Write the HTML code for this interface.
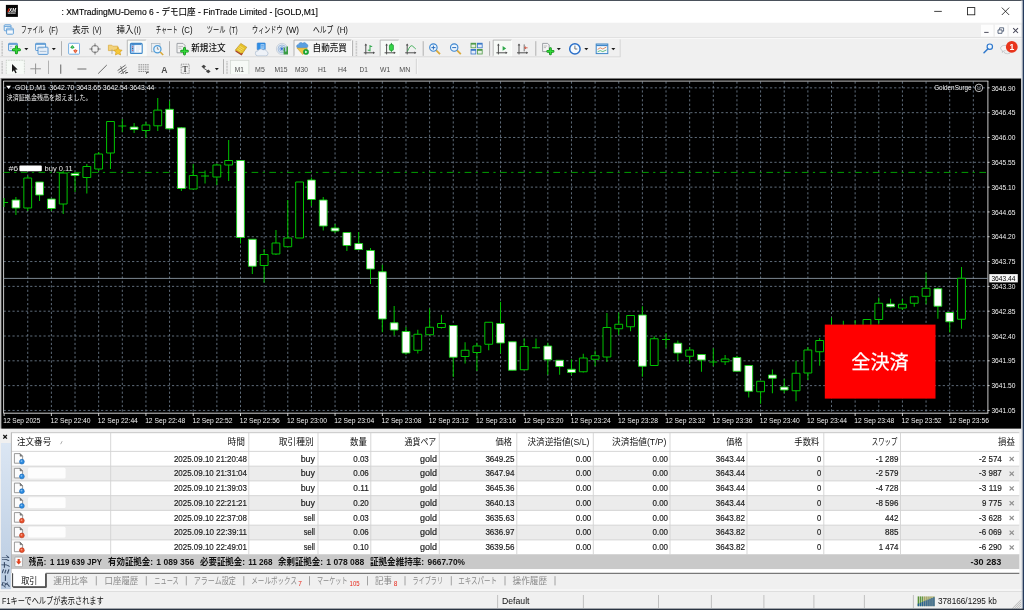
<!DOCTYPE html>
<html lang="ja"><head><meta charset="utf-8"><title>XMTradingMU-Demo 6 - デモ口座 - [GOLD,M1]</title>
<style>
html,body{margin:0;padding:0;background:#f0f0f0;}
body{width:1024px;height:610px;position:relative;overflow:hidden;font-family:'Liberation Sans','Noto Sans CJK JP',sans-serif;}
svg{position:absolute;left:0;display:block;overflow:hidden;will-change:transform}
svg text{font-family:'Liberation Sans','Noto Sans CJK JP',sans-serif;white-space:pre}
#frame{position:absolute;left:0;top:0;width:1024px;height:610px;pointer-events:none}
</style></head><body>
<svg id="top" width="1024" height="78" viewBox="0 0 1024 78" style="top:0">
<rect x="0" y="0" width="1024" height="78" fill="#f0f0f0"/>
<rect x="0" y="0" width="1024" height="22.7" fill="#fff"/>
<rect x="5.9" y="4.9" width="12" height="12" fill="#050505"/>
<path d="M7.3 11.9l1-3.4h1.5l-1 3.4z" fill="#c8200c"/>
<text x="9.1" y="11.5" font-size="4.8" fill="#fff" font-weight="bold" textLength="7" lengthAdjust="spacingAndGlyphs" font-style="italic">XM</text>
<rect x="7.6" y="12.2" width="8.2" height="1.3" fill="#9a9a9a" opacity="0.85"/>
<text x="7.7" y="13.5" font-size="1.6" fill="#ddd" font-weight="bold" textLength="8" lengthAdjust="spacingAndGlyphs">TRADING</text>
<text x="61.4" y="14.8" font-size="9.0" fill="#000" textLength="256.6" lengthAdjust="spacingAndGlyphs" stroke="#000" stroke-width="0.12">: XMTradingMU-Demo 6 - デモ口座 - FinTrade Limited - [GOLD,M1]</text>
<path d="M934.2 11.4h7.6" stroke="#111" stroke-width="0.8" fill="none"/>
<rect x="967.6" y="7.6" width="7.2" height="7.2" stroke="#111" stroke-width="0.8" fill="none"/>
<path d="M1001.8 7.6l7.4 7.4M1009.2 7.6l-7.4 7.4" stroke="#111" stroke-width="0.8" fill="none"/>
<rect x="0" y="37.3" width="1024" height="0.8" fill="#dadada"/><rect x="0" y="38.1" width="1024" height="0.7" fill="#fcfcfc"/>
<rect x="4.2" y="24.8" width="6.8" height="6" rx="0.8" fill="#eaf3fb" stroke="#5b9bd5" stroke-width="0.9"/><rect x="6.6" y="28.2" width="6.8" height="6" rx="0.8" fill="#f4f9fd" stroke="#5b9bd5" stroke-width="0.9"/><path d="M4.4 26.4h6.4M6.8 29.8h6.4" stroke="#5b9bd5" stroke-width="0.9"/>
<text x="20.9" y="33.3" font-size="8.9" fill="#0a0a0a" textLength="23.1" lengthAdjust="spacingAndGlyphs">ファイル</text>
<text x="48.9" y="33.3" font-size="8.9" fill="#0a0a0a" textLength="9.1" lengthAdjust="spacingAndGlyphs">(F)</text>
<text x="72.2" y="33.3" font-size="8.9" fill="#0a0a0a" textLength="17" lengthAdjust="spacingAndGlyphs">表示</text>
<text x="92.4" y="33.3" font-size="8.9" fill="#0a0a0a" textLength="9.1" lengthAdjust="spacingAndGlyphs">(V)</text>
<text x="116.6" y="33.3" font-size="8.9" fill="#0a0a0a" textLength="16.9" lengthAdjust="spacingAndGlyphs">挿入</text>
<text x="134.1" y="33.3" font-size="8.9" fill="#0a0a0a" textLength="7" lengthAdjust="spacingAndGlyphs">(I)</text>
<text x="155.7" y="33.3" font-size="8.9" fill="#0a0a0a" textLength="22.2" lengthAdjust="spacingAndGlyphs">チャート</text>
<text x="181.7" y="33.3" font-size="8.9" fill="#0a0a0a" textLength="10.8" lengthAdjust="spacingAndGlyphs">(C)</text>
<text x="206.7" y="33.3" font-size="8.9" fill="#0a0a0a" textLength="18.8" lengthAdjust="spacingAndGlyphs">ツール</text>
<text x="229.3" y="33.3" font-size="8.9" fill="#0a0a0a" textLength="8.3" lengthAdjust="spacingAndGlyphs">(T)</text>
<text x="252.1" y="33.3" font-size="8.9" fill="#0a0a0a" textLength="30.4" lengthAdjust="spacingAndGlyphs">ウィンドウ</text>
<text x="286" y="33.3" font-size="8.9" fill="#0a0a0a" textLength="13" lengthAdjust="spacingAndGlyphs">(W)</text>
<text x="313" y="33.3" font-size="8.9" fill="#0a0a0a" textLength="20.3" lengthAdjust="spacingAndGlyphs">ヘルプ</text>
<text x="337.1" y="33.3" font-size="8.9" fill="#0a0a0a" textLength="10.8" lengthAdjust="spacingAndGlyphs">(H)</text>
<rect x="981" y="24.8" width="12.3" height="11.7" fill="#fdfdfd"/>
<rect x="995" y="24.8" width="12.3" height="11.7" fill="#fdfdfd"/>
<rect x="1008.9" y="24.8" width="12.3" height="11.7" fill="#fdfdfd"/>
<path d="M984.2 32.4h4.4" stroke="#445" stroke-width="0.95"/>
<path d="M998 29.9h4v3.4h-4zM999.6 29.7v-1.9h4v3.4h-1.4" stroke="#3a4a66" stroke-width="0.8" fill="none"/>
<path d="M1013.2 28.2l4.8 4.8M1018 28.2l-4.8 4.8" stroke="#445" stroke-width="1.05"/>
<rect x="0" y="57.3" width="620" height="0.9" fill="#fafafa"/>
<rect x="1.4" y="41.4" width="1.6" height="0.8" fill="#b8b8b8"/><rect x="1.4" y="42.9" width="1.6" height="0.8" fill="#b8b8b8"/><rect x="1.4" y="44.4" width="1.6" height="0.8" fill="#b8b8b8"/><rect x="1.4" y="45.9" width="1.6" height="0.8" fill="#b8b8b8"/><rect x="1.4" y="47.4" width="1.6" height="0.8" fill="#b8b8b8"/><rect x="1.4" y="48.9" width="1.6" height="0.8" fill="#b8b8b8"/><rect x="1.4" y="50.4" width="1.6" height="0.8" fill="#b8b8b8"/><rect x="1.4" y="51.9" width="1.6" height="0.8" fill="#b8b8b8"/><rect x="1.4" y="53.4" width="1.6" height="0.8" fill="#b8b8b8"/><rect x="1.4" y="54.9" width="1.6" height="0.8" fill="#b8b8b8"/>
<rect x="8.6" y="43.3" width="8.8" height="7.4" rx="0.7" fill="#eef5fc" stroke="#4a8fd0" stroke-width="0.9"/><path d="M8.8 44.2h8.4" stroke="#3d86c8" stroke-width="1"/><path d="M10 46.4h2.4M10 48.2h1.6" stroke="#7d9fc0" stroke-width="0.6"/>
<path d="M16.4 46.70v6.0M13.40 49.7h6.0" stroke="#0b8a12" stroke-width="3.0" stroke-linecap="round"/><path d="M16.4 46.70v6.00M13.40 49.7h6.00" stroke="#34d63a" stroke-width="1.70" stroke-linecap="round"/>
<path d="M24.3 48.1h4l-2 2.1z" fill="#1a1a1a"/>
<rect x="35.6" y="43.3" width="10" height="7.2" rx="0.7" fill="#eef5fc" stroke="#4a8fd0" stroke-width="0.9"/><path d="M35.8 44.2h9.6" stroke="#3d86c8" stroke-width="1"/><rect x="38" y="47.2" width="10" height="7.2" rx="0.7" fill="#e6eff9" stroke="#4a8fd0" stroke-width="0.9"/><path d="M37.2 47.9h6.4" stroke="#7d9fc0" stroke-width="0.6"/><path d="M39.6 51.4h6.8" stroke="#7d9fc0" stroke-width="0.6"/>
<path d="M51.8 48.1h4l-2 2.1z" fill="#1a1a1a"/>
<path d="M61.5 41.2V55.8" stroke="#a9a9a9" stroke-width="0.9"/>
<rect x="68.6" y="43.3" width="10.9" height="10.9" rx="0.8" fill="#fdfeff" stroke="#6aa8e0" stroke-width="0.9"/><path d="M70.2 47.6l2.2-2.6 2.2 2.6-2.2 1.4z" fill="#27a844"/><path d="M72.4 46v3" stroke="#8fe0a0" stroke-width="0.5"/><path d="M73.2 50.6l2.2-1.4 2.2 1.4-2.2 2.8z" fill="#e2572c"/><path d="M75.4 50v2.6" stroke="#f6b09a" stroke-width="0.5"/>
<circle cx="95" cy="49" r="3.6" fill="none" stroke="#707070" stroke-width="0.9"/><path d="M95 43.4v3.4M95 51.2v3.4M89.4 49h3.4M97.2 49h3.4" stroke="#707070" stroke-width="0.9"/>
<path d="M108.4 45.2h3.4l1 1h5v4.4h-9.4z" fill="#f3d27a" stroke="#d9a93a" stroke-width="0.7"/><path d="M112 49.4v4.6" stroke="#999" stroke-width="0.7"/><path d="M118 47.2l1.3 2.6 2.8.4-2 2 .5 2.8-2.6-1.3-2.6 1.3.5-2.8-2-2 2.8-.4z" fill="#f6c83a" stroke="#d19a1a" stroke-width="0.6"/>
<rect x="127.3" y="40.1" width="18.9" height="16.1" fill="#f7faf7"/><path d="M127.3 56.2V40.1H146.2" stroke="#ababab" stroke-width="0.8" fill="none"/><path d="M127.3 56.2H146.2V40.1" stroke="#fdfdfd" stroke-width="0.8" fill="none"/>
<rect x="130.4" y="43.4" width="11.8" height="10" rx="1" fill="#fbfdff" stroke="#3d86c8" stroke-width="1.1"/><rect x="131" y="44" width="3.4" height="8.8" fill="#8fbdec"/><path d="M131.4 44.6h10" stroke="#3d86c8" stroke-width="1"/><path d="M132 46.8h1.2M132 50.4h1.2" stroke="#d44" stroke-width="0.8"/><path d="M132 48.6h1.2" stroke="#246" stroke-width="0.8"/><path d="M136 47h4.4M136 49h4.4M136 51h3" stroke="#c4d4e4" stroke-width="0.6"/>
<rect x="151.4" y="43.4" width="8.6" height="8.4" fill="#e9eef2" stroke="#a9b4bd" stroke-width="0.7"/><circle cx="157.4" cy="49.2" r="3.6" fill="#eaf4fc" stroke="#4a9ad8" stroke-width="1.2"/><path d="M157.4 47v2.2h1.6" stroke="#555" stroke-width="0.6" fill="none"/><path d="M160.2 52l3 3" stroke="#d9a93a" stroke-width="1.6"/>
<path d="M169.5 41.2V55.8" stroke="#a9a9a9" stroke-width="0.9"/>
<path d="M177 43.4h6l2 2v7.4h-8z" fill="#f4f4f4" stroke="#8a8f96" stroke-width="0.8"/><path d="M178.4 46.4h4.6M178.4 48.2h3" stroke="#999" stroke-width="0.6"/><path d="M184.5 48.30v5.8M181.60 51.2h5.8" stroke="#0b8a12" stroke-width="2.8" stroke-linecap="round"/><path d="M184.5 48.30v5.80M181.60 51.2h5.80" stroke="#34d63a" stroke-width="1.50" stroke-linecap="round"/>
<text x="191.2" y="51.1" font-size="8.8" fill="#111" font-weight="500" textLength="34.4" lengthAdjust="spacingAndGlyphs">新規注文</text>
<path d="M235.2 50.2l5.6-6.8 6 3.8-5 7.2z" fill="#e6c22a" stroke="#b98a1a" stroke-width="0.6"/><path d="M235.6 51l5.8 3.6 1-1.4" stroke="#a8452a" stroke-width="1.2" fill="none"/><path d="M238.4 47.6l4.2 2.6M239.6 46.2l4.2 2.6M237.4 49.2l4 2.4" stroke="#f6e48a" stroke-width="0.7"/>
<rect x="257.2" y="43" width="8" height="6.8" rx="0.6" fill="#2f8fe6" stroke="#2a78cc" stroke-width="0.6"/><rect x="260.6" y="44.2" width="3.8" height="4.6" fill="#a8d4fa"/><path d="M261.2 45.6h2.6M261.2 47h2.6" stroke="#2a78cc" stroke-width="0.5"/><path transform="translate(0,1.1)" d="M255.4 52.2a2.4 2.2 0 0 1 2.6-2.4a3 3 0 0 1 5-1a2.6 2.6 0 0 1 3.6 1.4a2.2 2.2 0 0 1 1.4 2.4a2.4 2.4 0 0 1-2.4 2.2h-7.8a2.4 2.4 0 0 1-2.4-2.4z" fill="#eef2f8" stroke="#9fb2c8" stroke-width="0.6"/>
<circle cx="282" cy="48.9" r="5.6" fill="#e6ebf1" stroke="#b4c0cc" stroke-width="0.6"/><circle cx="282" cy="48.9" r="3.9" fill="none" stroke="#8fb0d8" stroke-width="0.8"/><circle cx="282" cy="48.9" r="2.2" fill="none" stroke="#6a9ad6" stroke-width="0.8"/><circle cx="281.8" cy="48.8" r="1.2" fill="#2f6fd0"/><path d="M283.6 47.4h1.4v4h1.4v-5h1.6v8h-4.4z" fill="#3a9c44"/>
<rect x="294" y="40.1" width="57.4" height="16.1" fill="#f6f6f6"/><path d="M294 56.2V40.1H351.4" stroke="#a4a4a4" stroke-width="0.8" fill="none"/><path d="M294 56.2H351.4V40.1" stroke="#fcfcfc" stroke-width="0.8" fill="none"/>
<path d="M296.8 47.8l10.6 0-4.6 6.8z" fill="#f0c748" stroke="#c99a2a" stroke-width="0.6"/><path d="M296.6 46.6a2 2 0 0 1 1.8-2.2a2.6 2.6 0 0 1 4.2-1.2a2.8 2.8 0 0 1 4 .8a1.9 1.9 0 0 1 1.2 2.4a1.6 1.6 0 0 1-1.4 1.2h-8.4a1.6 1.6 0 0 1-1.4-1z" fill="#5a9fe0" stroke="#3d7fc4" stroke-width="0.5"/><circle cx="306" cy="51.9" r="2.7" fill="#18a834" stroke="#0d8a24" stroke-width="0.4"/><path d="M305.2 50.5l2.3 1.4-2.3 1.4z" fill="#fff"/>
<text x="312.6" y="51.2" font-size="8.8" fill="#111" font-weight="500" textLength="34.2" lengthAdjust="spacingAndGlyphs">自動売買</text>
<path d="M352.6 40.4V56" stroke="#a9a9a9" stroke-width="0.9"/>
<rect x="355.6" y="41.4" width="1.6" height="0.8" fill="#b8b8b8"/><rect x="355.6" y="42.9" width="1.6" height="0.8" fill="#b8b8b8"/><rect x="355.6" y="44.4" width="1.6" height="0.8" fill="#b8b8b8"/><rect x="355.6" y="45.9" width="1.6" height="0.8" fill="#b8b8b8"/><rect x="355.6" y="47.4" width="1.6" height="0.8" fill="#b8b8b8"/><rect x="355.6" y="48.9" width="1.6" height="0.8" fill="#b8b8b8"/><rect x="355.6" y="50.4" width="1.6" height="0.8" fill="#b8b8b8"/><rect x="355.6" y="51.9" width="1.6" height="0.8" fill="#b8b8b8"/><rect x="355.6" y="53.4" width="1.6" height="0.8" fill="#b8b8b8"/><rect x="355.6" y="54.9" width="1.6" height="0.8" fill="#b8b8b8"/>
<path d="M365.8 44.4V54.4M363.8 52.8H374.2" stroke="#505050" stroke-width="1" fill="none"/><path d="M365.8 43.4l1.3 2h-2.6zM375.0 52.8l-2 1.3v-2.6z" fill="#505050"/><path d="M370 45v6.4M370 46.4h2.2M367.8 50.2h2.2" stroke="#2fa84a" stroke-width="1"/>
<rect x="380.2" y="40.1" width="18.7" height="16.1" fill="#f7faf7"/><path d="M380.2 56.2V40.1H398.9" stroke="#ababab" stroke-width="0.8" fill="none"/><path d="M380.2 56.2H398.9V40.1" stroke="#fdfdfd" stroke-width="0.8" fill="none"/>
<path d="M386.6 44.4V54.4M384.6 52.8H395.0" stroke="#505050" stroke-width="1" fill="none"/><path d="M386.6 43.4l1.3 2h-2.6zM395.8 52.8l-2 1.3v-2.6z" fill="#505050"/><path d="M391.4 42.9v9" stroke="#17902c" stroke-width="0.9"/><rect x="389.4" y="44.6" width="4" height="5.8" rx="1" fill="#35d648" stroke="#17902c" stroke-width="0.7"/>
<path d="M407.2 44.4V54.4M405.2 52.8H415.59999999999997" stroke="#505050" stroke-width="1" fill="none"/><path d="M407.2 43.4l1.3 2h-2.6zM416.4 52.8l-2 1.3v-2.6z" fill="#505050"/><path d="M407.4 51.4q3-7 5-5.4t3.4 3" stroke="#2fa84a" stroke-width="0.9" fill="none"/>
<path d="M423.2 41.2V55.8" stroke="#a9a9a9" stroke-width="0.9"/>
<path d="M436.0 50.2l4 4" stroke="#d9a93a" stroke-width="1.8"/><circle cx="433.4" cy="47.6" r="3.7" fill="#eaf4fc" stroke="#3d86d0" stroke-width="1.1"/><path d="M431.4 47.6h4M433.4 45.6v4" stroke="#2a6fc0" stroke-width="1"/>
<path d="M456.8 50.2l4 4" stroke="#d9a93a" stroke-width="1.8"/><circle cx="454.2" cy="47.6" r="3.7" fill="#eaf4fc" stroke="#3d86d0" stroke-width="1.1"/><path d="M452.2 47.6h4" stroke="#2a6fc0" stroke-width="1"/>
<rect x="470.6" y="42.8" width="5.6" height="5.4" fill="#4f9a4a"/><rect x="477" y="42.8" width="5.6" height="5.4" fill="#3a78c8"/><rect x="470.6" y="49" width="5.6" height="5.4" fill="#3a78c8"/><rect x="477" y="49" width="5.6" height="5.4" fill="#4f9a4a"/><rect x="471.4" y="44.6" width="4" height="2.8" fill="#e8f0e4"/><rect x="477.8" y="44.6" width="4" height="2.8" fill="#e4ecf8"/><rect x="471.4" y="50.8" width="4" height="2.8" fill="#e4ecf8"/><rect x="477.8" y="50.8" width="4" height="2.8" fill="#e8f0e4"/>
<path d="M489.6 41.2V55.8" stroke="#a9a9a9" stroke-width="0.9"/>
<rect x="493.2" y="40.1" width="18.4" height="16.1" fill="#f7faf7"/><path d="M493.2 56.2V40.1H511.59999999999997" stroke="#ababab" stroke-width="0.8" fill="none"/><path d="M493.2 56.2H511.59999999999997V40.1" stroke="#fdfdfd" stroke-width="0.8" fill="none"/>
<path d="M498.4 44.4V54.4M496.4 52.8H506.79999999999995" stroke="#505050" stroke-width="1" fill="none"/><path d="M498.4 43.4l1.3 2h-2.6zM507.59999999999997 52.8l-2 1.3v-2.6z" fill="#505050"/><path d="M502.6 46l3.6 2.4-3.6 2.4z" fill="#2fa84a"/>
<path d="M519 44.4V54.4M517 52.8H527.4" stroke="#505050" stroke-width="1" fill="none"/><path d="M519 43.4l1.3 2h-2.6zM528.2 52.8l-2 1.3v-2.6z" fill="#505050"/><path d="M524.2 44.4v7" stroke="#555" stroke-width="0.8"/><path d="M527.6 47.8h-2.8m1.2-1.2l-1.4 1.2 1.4 1.2" stroke="#d0402a" stroke-width="0.8" fill="none"/>
<path d="M535.8 41.2V55.8" stroke="#a9a9a9" stroke-width="0.9"/>
<path d="M542.6 43.4h5l1.6 1.6v6.6h-6.6z" fill="#f4f4f4" stroke="#8a8f96" stroke-width="0.8"/><path d="M543.8 46h3.4M543.8 47.6h2.2" stroke="#999" stroke-width="0.6"/><path d="M550.4 48.60v5.4M547.70 51.3h5.4" stroke="#0b8a12" stroke-width="2.7" stroke-linecap="round"/><path d="M550.4 48.60v5.40M547.70 51.3h5.40" stroke="#34d63a" stroke-width="1.40" stroke-linecap="round"/>
<path d="M556.8 48.1h4l-2 2.1z" fill="#1a1a1a"/>
<circle cx="574.9" cy="48.9" r="5.2" fill="#f6fbff" stroke="#2a6fc8" stroke-width="1.5"/><path d="M574.9 45.6v3.4h2.4" stroke="#444" stroke-width="0.7" fill="none"/>
<path d="M584.3 48.1h4l-2 2.1z" fill="#1a1a1a"/>
<rect x="596.2" y="44" width="11.6" height="9.6" fill="#f2f7fc" stroke="#3d86c8" stroke-width="1"/><path d="M596.2 45.4h11.6" stroke="#3d86c8" stroke-width="1.4"/><path d="M597.6 49.4l2.6-1.6 2.6 1.2 3.6-2" stroke="#d9652a" stroke-width="0.7" fill="none"/><path d="M597.6 51.8l2.6-1.2 2.6 1 3.6-1.6" stroke="#2fa84a" stroke-width="0.7" fill="none"/>
<path d="M611.3 48.1h4l-2 2.1z" fill="#1a1a1a"/>
<path d="M620.2 39.4V56.9H0" stroke="#d0d0d0" stroke-width="0.8" fill="none"/>
<circle cx="989.8" cy="46.7" r="2.7" fill="#eef6fd" stroke="#2f78cc" stroke-width="1.2"/><path d="M987.8 48.9l-3.8 3.9" stroke="#2f78cc" stroke-width="1.5" stroke-linecap="round"/>
<path d="M1000.6 48.2a4 2.8 0 1 1 3 2.7l-1.2 1.6 0-1.9a4 2.8 0 0 1-1.8-2.4z" fill="#f4f4f4" stroke="#b4b8bc" stroke-width="0.7"/><path d="M1004 51.6a3.4 2.2 0 1 0 3.4-2.2" fill="#ededed" stroke="#b4b8bc" stroke-width="0.6"/>
<circle cx="1011.8" cy="46.9" r="5.9" fill="#e8341c"/>
<text x="1011.8" y="49.9" font-size="8.6" fill="#fff" text-anchor="middle" font-weight="bold">1</text>
<rect x="1.4" y="61.4" width="1.6" height="0.8" fill="#b8b8b8"/><rect x="1.4" y="62.9" width="1.6" height="0.8" fill="#b8b8b8"/><rect x="1.4" y="64.4" width="1.6" height="0.8" fill="#b8b8b8"/><rect x="1.4" y="65.9" width="1.6" height="0.8" fill="#b8b8b8"/><rect x="1.4" y="67.4" width="1.6" height="0.8" fill="#b8b8b8"/><rect x="1.4" y="68.9" width="1.6" height="0.8" fill="#b8b8b8"/><rect x="1.4" y="70.4" width="1.6" height="0.8" fill="#b8b8b8"/><rect x="1.4" y="71.9" width="1.6" height="0.8" fill="#b8b8b8"/><rect x="1.4" y="73.4" width="1.6" height="0.8" fill="#b8b8b8"/><rect x="1.4" y="74.9" width="1.6" height="0.8" fill="#b8b8b8"/>
<rect x="6.3" y="60.3" width="18.1" height="16" fill="#f6faf6" stroke="#aab4aa" stroke-width="0.6" stroke-dasharray="0.8 0.8"/>
<path d="M12 63.9v8l1.9-1.7 1.5 3.1 1.3-.6-1.5-3 2.5-.1z" fill="#1a1a1a"/>
<path d="M35.6 63.5v10.5M30.3 68.8h10.6" stroke="#8a8a8a" stroke-width="0.9"/>
<path d="M48.5 60.6V76.2" stroke="#a9a9a9" stroke-width="0.9"/>
<path d="M60.7 64.4v9.4" stroke="#7a7a7a" stroke-width="1.2"/>
<path d="M77.4 69h9" stroke="#7a7a7a" stroke-width="1.1"/>
<path d="M98.2 73.6l8.6-8.6" stroke="#6a6a6a" stroke-width="1"/>
<path d="M117.6 70.6l8-5.6M118.6 72.8l8-5.6M119.8 74.8l6.6-4.6" stroke="#5a5a5a" stroke-width="0.9" fill="none"/><path d="M120.6 66.2l3 7.6" stroke="#5a5a5a" stroke-width="0.7"/><text x="125.2" y="76" font-size="4.6" fill="#333" font-weight="bold">E</text>
<path d="M138.4 64.8h10.4M138.4 67h10.4M138.4 69.2h10.4M138.4 71.4h10.4" stroke="#6e6e6e" stroke-width="0.8" stroke-dasharray="1.5 0.7"/><text x="146" y="76.2" font-size="4.6" fill="#333" font-weight="bold">F</text>
<text x="164.4" y="72.7" font-size="8.6" fill="#4a4a4a" text-anchor="middle" font-weight="bold">A</text>
<rect x="181.2" y="64.2" width="8" height="9.2" fill="none" stroke="#6a6a6a" stroke-width="0.7" stroke-dasharray="1 0.7"/><text x="185.2" y="72.3" font-size="7.8" fill="#444" text-anchor="middle" font-weight="bold" style="font-family:'Liberation Serif',serif">T</text>
<path d="M201.4 66.6l2.3-1.9 2.3 1.9-2.3 1.9zM206 71.4l2.3-1.9 2.3 1.9-2.3 1.9z" fill="#444"/><path d="M203.6 68.2l4.6 3" stroke="#444" stroke-width="0.9"/>
<path d="M214.8 68.10000000000001h4l-2 2.1z" fill="#1a1a1a"/>
<path d="M223.5 59.2V77" stroke="#a9a9a9" stroke-width="0.9"/>
<rect x="226.2" y="61.4" width="1.6" height="0.8" fill="#b8b8b8"/><rect x="226.2" y="62.9" width="1.6" height="0.8" fill="#b8b8b8"/><rect x="226.2" y="64.4" width="1.6" height="0.8" fill="#b8b8b8"/><rect x="226.2" y="65.9" width="1.6" height="0.8" fill="#b8b8b8"/><rect x="226.2" y="67.4" width="1.6" height="0.8" fill="#b8b8b8"/><rect x="226.2" y="68.9" width="1.6" height="0.8" fill="#b8b8b8"/><rect x="226.2" y="70.4" width="1.6" height="0.8" fill="#b8b8b8"/><rect x="226.2" y="71.9" width="1.6" height="0.8" fill="#b8b8b8"/><rect x="226.2" y="73.4" width="1.6" height="0.8" fill="#b8b8b8"/><rect x="226.2" y="74.9" width="1.6" height="0.8" fill="#b8b8b8"/>
<rect x="230.6" y="60.3" width="18.3" height="16" fill="#f6faf6" stroke="#cfd6cf" stroke-width="0.7"/>
<text x="234.8" y="71.9" font-size="7.6" fill="#4c4c4c" textLength="9.1" lengthAdjust="spacingAndGlyphs">M1</text>
<text x="255.1" y="71.9" font-size="7.6" fill="#4c4c4c" textLength="9.7" lengthAdjust="spacingAndGlyphs">M5</text>
<text x="274.5" y="71.9" font-size="7.6" fill="#4c4c4c" textLength="13.1" lengthAdjust="spacingAndGlyphs">M15</text>
<text x="294.9" y="71.9" font-size="7.6" fill="#4c4c4c" textLength="13" lengthAdjust="spacingAndGlyphs">M30</text>
<text x="318" y="71.9" font-size="7.6" fill="#4c4c4c" textLength="8.6" lengthAdjust="spacingAndGlyphs">H1</text>
<text x="338" y="71.9" font-size="7.6" fill="#4c4c4c" textLength="8.8" lengthAdjust="spacingAndGlyphs">H4</text>
<text x="359.6" y="71.9" font-size="7.6" fill="#4c4c4c" textLength="8.3" lengthAdjust="spacingAndGlyphs">D1</text>
<text x="380" y="71.9" font-size="7.6" fill="#4c4c4c" textLength="10.2" lengthAdjust="spacingAndGlyphs">W1</text>
<text x="399.3" y="71.9" font-size="7.6" fill="#4c4c4c" textLength="11" lengthAdjust="spacingAndGlyphs">MN</text>
<path d="M416.4 58.8V77.4" stroke="#c6c6c6" stroke-width="0.9" fill="none"/><path d="M417.2 58.8V77.4" stroke="#fcfcfc" stroke-width="0.8" fill="none"/>
<rect x="0" y="76.6" width="1024" height="1.4" fill="#fbfbfb"/>
</svg>
<svg id="chart" width="1024" height="360" viewBox="0 74 1024 360" style="position:absolute;left:0;top:74px">
<rect x="0" y="74" width="1024" height="360" fill="#f0f0f0"/>
<rect x="0" y="76.6" width="1022" height="1.4" fill="#fbfbfb"/>
<rect x="0.5" y="77.9" width="1020.7" height="350.7" fill="#8c8c8c"/>
<rect x="1.5" y="78.9" width="1019.6" height="349.6" fill="#000"/>
<path d="M3.6 87.85H988M3.6 112.66H988M3.6 137.48H988M3.6 162.30H988M3.6 187.11H988M3.6 211.93H988M3.6 236.74H988M3.6 261.56H988M3.6 286.37H988M3.6 311.19H988M3.6 336.00H988M3.6 360.82H988M3.6 385.63H988M3.6 410.45H988M27.74 81.5V413M51.38 81.5V413M75.02 81.5V413M98.66 81.5V413M122.30 81.5V413M145.94 81.5V413M169.58 81.5V413M193.22 81.5V413M216.86 81.5V413M240.50 81.5V413M264.14 81.5V413M287.78 81.5V413M311.42 81.5V413M335.06 81.5V413M358.70 81.5V413M382.34 81.5V413M405.98 81.5V413M429.62 81.5V413M453.26 81.5V413M476.90 81.5V413M500.54 81.5V413M524.18 81.5V413M547.82 81.5V413M571.46 81.5V413M595.10 81.5V413M618.74 81.5V413M642.38 81.5V413M666.02 81.5V413M689.66 81.5V413M713.30 81.5V413M736.94 81.5V413M760.58 81.5V413M784.22 81.5V413M807.86 81.5V413M831.50 81.5V413M855.14 81.5V413M878.78 81.5V413M902.42 81.5V413M926.06 81.5V413M949.70 81.5V413M973.34 81.5V413" stroke="#708090" stroke-width="0.85" stroke-dasharray="2.2 2.23" fill="none"/>
<path d="M3.6 413.2V81M987.9 81V413.2" stroke="#e0e0e0" stroke-width="0.9" fill="none"/><path d="M3.2 81.1H988.3" stroke="#e0e0e0" stroke-width="0.85" fill="none"/>
<path d="M3.6 413.2H988.3" stroke="#e6e6e6" stroke-width="0.9" fill="none"/>
<path d="M3.6 172.4H988" stroke="#00b000" stroke-width="0.9" stroke-dasharray="6.65 4.4 2.25 4.45" stroke-dashoffset="0.5" fill="none"/>
<path d="M3.6 278.4H988" stroke="#8a96a2" stroke-width="0.9" fill="none"/>
<path d="M4.10 198V207M4.00 202.5H8.10M15.92 197V215M27.74 176V211M39.56 182V201M51.38 199V211M63.20 171V214M75.02 173.5V192M86.84 164V193.5M98.66 152V171M110.48 121.5V169M122.30 119V132M118.30 126H126.30M134.12 123V133M145.94 122V138M157.76 98V131M169.58 100.9V130M181.40 127V191M193.22 164V189M205.04 170.5V183.5M201.04 176H209.04M216.86 163.5V185M228.68 140V181M240.50 160.5V243.5M252.32 239.25V274M264.14 249V282.5M275.96 230V255M287.78 200V246.75M299.60 182V238M311.42 177.5V206M323.24 197V230.5M335.06 224V233M346.88 232.5V251M358.70 232V249.5M370.52 248V284M382.34 264.75V332.25M394.16 306V335.5M405.98 327V354.75M417.80 329.75V353.5M429.62 308.5V334.75M441.44 314.75V328.5M453.26 325.5V377M465.08 342.25V363.5M476.90 342.75V371M488.72 322.25V350.25M500.54 301.75V353.5M512.36 341.75V370.25M524.18 338.5V369.75M536.00 338.5V348.5M532.00 347.75H540.00M547.82 342.75V374.75M559.64 360.25V374.75M571.46 359.25V375M583.28 353.75V372.5M595.10 350.5V366.25M606.92 313V362M618.74 312.5V335M630.56 315.5V331.25M642.38 306.25V376.75M654.20 336.25V365.5M666.02 333.25V348.25M662.02 339.5H670.02M677.84 340.5V361.25M689.66 347V363.75M701.48 354.5V371.75M713.30 348.25V366.25M709.30 362H717.30M725.12 355V365M736.94 355.75V371.25M748.76 365.5V397.5M760.58 381.25V403.75M772.40 369.5V393.25M784.22 378.75V393M796.04 360.75V401.25M807.86 347V380M819.68 338V365.75M831.50 317.5V345M843.32 320.75V340M855.14 320V338M866.96 319.5V336M878.78 297.5V324.5M890.60 298.75V307.5M902.42 298.75V310M914.24 295.75V306.75M926.06 272.5V304.25M937.88 287.5V318.75M949.70 312.5V332.5M961.52 267V328.75" stroke="#00c400" stroke-width="1" fill="none"/>
<path d="M23.84 178H31.64V208H23.84ZM59.30 173H67.10V204H59.30ZM82.94 166.5H90.74V177.5H82.94ZM94.76 154H102.56V169H94.76ZM106.58 121.5H114.38V153H106.58ZM142.04 125H149.84V130.5H142.04ZM153.86 110.1H161.66V125.8H153.86ZM189.32 175.5H197.12V189H189.32ZM212.96 165H220.76V177H212.96ZM224.78 160.5H232.58V165H224.78ZM260.24 254.5H268.04V265.5H260.24ZM272.06 243H279.86V254H272.06ZM283.88 238H291.68V246.75H283.88ZM295.70 182H303.50V238H295.70ZM413.90 334.25H421.70V350.25H413.90ZM425.72 327.25H433.52V334.75H425.72ZM437.54 323.5H445.34V327.5H437.54ZM461.18 350.25H468.98V356.5H461.18ZM473.00 346H480.80V352.5H473.00ZM484.82 322.25H492.62V344.25H484.82ZM520.28 346.5H528.08V369.75H520.28ZM579.38 358H587.18V371.75H579.38ZM591.20 355.75H599.00V359.25H591.20ZM603.02 327.5H610.82V357H603.02ZM614.84 324.25H622.64V328.75H614.84ZM626.66 315.5H634.46V326.75H626.66ZM650.30 338.75H658.10V365.5H650.30ZM685.76 350H693.56V356.25H685.76ZM721.22 359H729.02V361.75H721.22ZM756.68 381.25H764.48V391.75H756.68ZM792.14 373.25H799.94V390.75H792.14ZM803.96 350H811.76V373H803.96ZM815.78 340.5H823.58V351.75H815.78ZM827.60 328H835.40V340H827.60ZM839.42 328H847.22V338H839.42ZM851.24 328H859.04V335H851.24ZM863.06 319.5H870.86V335H863.06ZM874.88 303.25H882.68V319.5H874.88ZM898.52 304.25H906.32V308H898.52ZM910.34 296.75H918.14V303.25H910.34ZM922.16 288.25H929.96V296.25H922.16ZM957.62 278.25H965.42V319.25H957.62Z" stroke="#00c400" stroke-width="1" fill="#000"/>
<path d="M12.02 200H19.82V208H12.02ZM35.66 182H43.46V195H35.66ZM47.48 199H55.28V208.5H47.48ZM71.12 173.5H78.92V175.5H71.12ZM130.22 127H138.02V129.5H130.22ZM165.68 109.3H173.48V128.8H165.68ZM177.50 127.8H185.30V188.5H177.50ZM236.60 160.5H244.40V237.5H236.60ZM248.42 239.25H256.22V266.25H248.42ZM307.52 180H315.32V199.5H307.52ZM319.34 200H327.14V226H319.34ZM331.16 228H338.96V231H331.16ZM342.98 232.5H350.78V245.5H342.98ZM354.80 243.5H362.60V249.5H354.80ZM366.62 250.5H374.42V269H366.62ZM378.44 271.75H386.24V319H378.44ZM390.26 322.75H398.06V330H390.26ZM402.08 331.5H409.88V353H402.08ZM449.36 325.5H457.16V357.25H449.36ZM496.64 323.5H504.44V343H496.64ZM508.46 341.75H516.26V370.25H508.46ZM543.92 346H551.72V359.75H543.92ZM555.74 360.25H563.54V366.5H555.74ZM567.56 369.25H575.36V372.5H567.56ZM638.48 315H646.28V366.25H638.48ZM673.94 343.25H681.74V353H673.94ZM697.58 354.5H705.38V360H697.58ZM733.04 357.5H740.84V371.25H733.04ZM744.86 365.5H752.66V391.25H744.86ZM768.50 375H776.30V378.25H768.50ZM780.32 387H788.12V390H780.32ZM886.70 304H894.50V306.75H886.70ZM933.98 288.75H941.78V306.25H933.98ZM945.80 312.5H953.60V321.75H945.80Z" stroke="#18d418" stroke-width="0.9" fill="#fff"/>
<path d="M4.10 413V416M51.38 413V416M98.66 413V416M145.94 413V416M193.22 413V416M240.50 413V416M287.78 413V416M335.06 413V416M382.34 413V416M429.62 413V416M476.90 413V416M524.18 413V416M571.46 413V416M618.74 413V416M666.02 413V416M713.30 413V416M760.58 413V416M807.86 413V416M855.14 413V416M902.42 413V416M949.70 413V416" stroke="#e0e0e0" stroke-width="0.9" fill="none"/>
<g font-family="'Liberation Sans',sans-serif" font-size="7.2" fill="#f2f2f2">
<text x="3.30" y="423.1" textLength="37" lengthAdjust="spacingAndGlyphs">12 Sep 2025</text>
<text x="50.58" y="423.1" textLength="40" lengthAdjust="spacingAndGlyphs">12 Sep 22:40</text>
<text x="97.86" y="423.1" textLength="40" lengthAdjust="spacingAndGlyphs">12 Sep 22:44</text>
<text x="145.14" y="423.1" textLength="40" lengthAdjust="spacingAndGlyphs">12 Sep 22:48</text>
<text x="192.42" y="423.1" textLength="40" lengthAdjust="spacingAndGlyphs">12 Sep 22:52</text>
<text x="239.70" y="423.1" textLength="40" lengthAdjust="spacingAndGlyphs">12 Sep 22:56</text>
<text x="286.98" y="423.1" textLength="40" lengthAdjust="spacingAndGlyphs">12 Sep 23:00</text>
<text x="334.26" y="423.1" textLength="40" lengthAdjust="spacingAndGlyphs">12 Sep 23:04</text>
<text x="381.54" y="423.1" textLength="40" lengthAdjust="spacingAndGlyphs">12 Sep 23:08</text>
<text x="428.82" y="423.1" textLength="40" lengthAdjust="spacingAndGlyphs">12 Sep 23:12</text>
<text x="476.10" y="423.1" textLength="40" lengthAdjust="spacingAndGlyphs">12 Sep 23:16</text>
<text x="523.38" y="423.1" textLength="40" lengthAdjust="spacingAndGlyphs">12 Sep 23:20</text>
<text x="570.66" y="423.1" textLength="40" lengthAdjust="spacingAndGlyphs">12 Sep 23:24</text>
<text x="617.94" y="423.1" textLength="40" lengthAdjust="spacingAndGlyphs">12 Sep 23:28</text>
<text x="665.22" y="423.1" textLength="40" lengthAdjust="spacingAndGlyphs">12 Sep 23:32</text>
<text x="712.50" y="423.1" textLength="40" lengthAdjust="spacingAndGlyphs">12 Sep 23:36</text>
<text x="759.78" y="423.1" textLength="40" lengthAdjust="spacingAndGlyphs">12 Sep 23:40</text>
<text x="807.06" y="423.1" textLength="40" lengthAdjust="spacingAndGlyphs">12 Sep 23:44</text>
<text x="854.34" y="423.1" textLength="40" lengthAdjust="spacingAndGlyphs">12 Sep 23:48</text>
<text x="901.62" y="423.1" textLength="40" lengthAdjust="spacingAndGlyphs">12 Sep 23:52</text>
<text x="948.90" y="423.1" textLength="40" lengthAdjust="spacingAndGlyphs">12 Sep 23:56</text>
<text x="991.4" y="90.50" textLength="24" lengthAdjust="spacingAndGlyphs">3646.90</text>
<text x="991.4" y="115.31" textLength="24" lengthAdjust="spacingAndGlyphs">3646.45</text>
<text x="991.4" y="140.13" textLength="24" lengthAdjust="spacingAndGlyphs">3646.00</text>
<text x="991.4" y="164.95" textLength="24" lengthAdjust="spacingAndGlyphs">3645.55</text>
<text x="991.4" y="189.76" textLength="24" lengthAdjust="spacingAndGlyphs">3645.10</text>
<text x="991.4" y="214.58" textLength="24" lengthAdjust="spacingAndGlyphs">3644.65</text>
<text x="991.4" y="239.39" textLength="24" lengthAdjust="spacingAndGlyphs">3644.20</text>
<text x="991.4" y="264.20" textLength="24" lengthAdjust="spacingAndGlyphs">3643.75</text>
<text x="991.4" y="289.02" textLength="24" lengthAdjust="spacingAndGlyphs">3643.30</text>
<text x="991.4" y="313.83" textLength="24" lengthAdjust="spacingAndGlyphs">3642.85</text>
<text x="991.4" y="338.65" textLength="24" lengthAdjust="spacingAndGlyphs">3642.40</text>
<text x="991.4" y="363.47" textLength="24" lengthAdjust="spacingAndGlyphs">3641.95</text>
<text x="991.4" y="388.28" textLength="24" lengthAdjust="spacingAndGlyphs">3641.50</text>
<text x="991.4" y="413.10" textLength="24" lengthAdjust="spacingAndGlyphs">3641.05</text>
</g>
<path d="M988 87.85H989.6M988 112.66H989.6M988 137.48H989.6M988 162.30H989.6M988 187.11H989.6M988 211.93H989.6M988 236.74H989.6M988 261.56H989.6M988 286.37H989.6M988 311.19H989.6M988 336.00H989.6M988 360.82H989.6M988 385.63H989.6M988 410.45H989.6" stroke="#e0e0e0" stroke-width="0.9" fill="none"/>
<rect x="989.3" y="274.1" width="28.5" height="8.3" fill="#f6f6f6"/>
<text x="991.4" y="281" font-family="'Liberation Sans',sans-serif" font-size="7.2" fill="#000" textLength="24" lengthAdjust="spacingAndGlyphs">3643.44</text>
<path d="M6.1 85.7h4.9l-2.45 3.2z" fill="#fff"/>
<text x="14.9" y="89.7" font-family="'Liberation Sans',sans-serif" font-size="6.9" fill="#f2f2f2" textLength="139.4" lengthAdjust="spacingAndGlyphs">GOLD,M1  3642.70 3643.65 3642.54 3643.44</text>
<text x="6.6" y="99.5" font-family="'Liberation Sans','Noto Sans CJK JP',sans-serif" font-size="7" fill="#f2f2f2" textLength="85" lengthAdjust="spacingAndGlyphs">決済証拠金残高を超えました。</text>
<text x="8.4" y="170.6" font-family="'Liberation Sans',sans-serif" font-size="7" fill="#e8e8e8" textLength="9.8" lengthAdjust="spacingAndGlyphs">#6</text>
<rect x="19.4" y="165.4" width="22.4" height="5.9" rx="1" fill="#fff"/>
<text x="44.6" y="170.6" font-family="'Liberation Sans',sans-serif" font-size="7" fill="#e8e8e8" textLength="28.2" lengthAdjust="spacingAndGlyphs">buy 0.11</text>
<text x="934.2" y="89.7" font-family="'Liberation Sans',sans-serif" font-size="6.9" fill="#f2f2f2" textLength="37.4" lengthAdjust="spacingAndGlyphs">GoldenSurge</text>
<circle cx="978.9" cy="87.9" r="3.8" fill="none" stroke="#eee" stroke-width="0.8"/><circle cx="977.7" cy="86.8" r="0.5" fill="#eee"/><circle cx="980.1" cy="86.8" r="0.5" fill="#eee"/><path d="M977 88.7q1.9 1.6 3.8 0" stroke="#eee" stroke-width="0.6" fill="none"/>
<rect x="824.8" y="324.6" width="110.7" height="74" fill="#ff0000"/>
<text x="880" y="369.2" text-anchor="middle" font-family="'Liberation Sans','Noto Sans CJK JP',sans-serif" font-size="19.1" fill="#fff" stroke="#fff" stroke-width="0.25">全決済</text>
</svg>
<svg id="terminal" width="1024" height="162" viewBox="0 429 1024 162" style="top:429px">
<rect x="0" y="429" width="1024" height="162" fill="#f0f0f0"/>
<defs><linearGradient id="stripg" x1="0" y1="0" x2="0" y2="1"><stop offset="0" stop-color="#dbe6f3"/><stop offset="1" stop-color="#b9cbe1"/></linearGradient></defs><rect x="1" y="443" width="9.8" height="146.6" fill="url(#stripg)"/>
<path d="M3.3 435l3.6 3.6M6.9 435l-3.6 3.6" stroke="#111" stroke-width="1.3"/>
<text transform="translate(9.1,588) rotate(-90)" font-size="9.4" fill="#1f3350" stroke="#1f3350" stroke-width="0.2" textLength="33" lengthAdjust="spacingAndGlyphs">ターミナル</text>
<rect x="11.2" y="432.6" width="1008.1" height="136.6" fill="#fff"/>
<path d="M11.2 432.7H1019.3" stroke="#b9b9b9" stroke-width="0.8"/>
<rect x="11.6" y="466.15" width="1007.7" height="14.75" fill="#ececec"/>
<rect x="11.6" y="495.65" width="1007.7" height="14.75" fill="#ececec"/>
<rect x="11.6" y="525.15" width="1007.7" height="14.75" fill="#ececec"/>
<path d="M11.6 451.40H1019.3M11.6 466.15H1019.3M11.6 480.90H1019.3M11.6 495.65H1019.3M11.6 510.40H1019.3M11.6 525.15H1019.3M11.6 539.90H1019.3M11.6 554.65H1019.3" stroke="#cdcdcd" stroke-width="0.8" fill="none"/>
<rect x="11.6" y="554.65" width="1007.7" height="14.4" fill="#c9c9c9"/>
<path d="M110.7 433V554.65M248.8 433V554.65M318 433V554.65M370.8 433V554.65M439.3 433V554.65M516.8 433V554.65M593.3 433V554.65M670 433V554.65M747 433V554.65M823.8 433V554.65M900.5 433V554.65" stroke="#d2d2d2" stroke-width="0.9" fill="none"/>
<path d="M11.4 432.6V573" stroke="#a4a4a4" stroke-width="0.8" fill="none"/>
<text x="16.9" y="445.4" font-size="8.7" fill="#111" textLength="34.4" lengthAdjust="spacingAndGlyphs">注文番号</text>
<path d="M60.6 444.2l1.6-3" stroke="#777" stroke-width="0.6"/>
<text x="227.5" y="445.4" font-size="8.7" fill="#111" textLength="17.5" lengthAdjust="spacingAndGlyphs">時間</text>
<text x="278.8" y="445.4" font-size="8.7" fill="#111" textLength="35" lengthAdjust="spacingAndGlyphs">取引種別</text>
<text x="350.0" y="445.4" font-size="8.7" fill="#111" textLength="16.8" lengthAdjust="spacingAndGlyphs">数量</text>
<text x="404.5" y="445.4" font-size="8.7" fill="#111" textLength="31.8" lengthAdjust="spacingAndGlyphs">通貨ペア</text>
<text x="495.5" y="445.4" font-size="8.7" fill="#111" textLength="16.5" lengthAdjust="spacingAndGlyphs">価格</text>
<text x="527.5" y="445.4" font-size="8.7" fill="#111" textLength="61.8" lengthAdjust="spacingAndGlyphs">決済逆指値(S/L)</text>
<text x="612.0" y="445.4" font-size="8.7" fill="#111" textLength="54.3" lengthAdjust="spacingAndGlyphs">決済指値(T/P)</text>
<text x="726.2" y="445.4" font-size="8.7" fill="#111" textLength="16.3" lengthAdjust="spacingAndGlyphs">価格</text>
<text x="794.3" y="445.4" font-size="8.7" fill="#111" textLength="25" lengthAdjust="spacingAndGlyphs">手数料</text>
<text x="871.8" y="445.4" font-size="8.7" fill="#111" textLength="25.5" lengthAdjust="spacingAndGlyphs">スワップ</text>
<text x="998.0" y="445.4" font-size="8.7" fill="#111" textLength="16.8" lengthAdjust="spacingAndGlyphs">損益</text>
<path d="M14.4 453.60h5.6l2.6 2.6v7h-8.2z" fill="#fcfcfc" stroke="#8d8d8d" stroke-width="0.9"/><path d="M20 453.60v2.6h2.6z" fill="#777" stroke="#777" stroke-width="0.5"/>
<circle cx="21.9" cy="461.70" r="2.4" fill="#2a8be0" stroke="#1766b8" stroke-width="0.6"/><circle cx="21.5" cy="461.10" r="0.9" fill="#fff" opacity="0.45"/>
<text x="173.9" y="461.5" font-size="9.1" fill="#1a1a1a" textLength="73.1" lengthAdjust="spacingAndGlyphs" stroke="#1a1a1a" stroke-width="0.18">2025.09.10 21:20:48</text>
<text x="300.7" y="461.5" font-size="9.1" fill="#1a1a1a" textLength="14.3" lengthAdjust="spacingAndGlyphs" stroke="#1a1a1a" stroke-width="0.18">buy</text>
<text x="353.3" y="461.5" font-size="9.1" fill="#1a1a1a" textLength="15.5" lengthAdjust="spacingAndGlyphs" stroke="#1a1a1a" stroke-width="0.18">0.03</text>
<text x="420" y="461.5" font-size="9.1" fill="#1a1a1a" textLength="17" lengthAdjust="spacingAndGlyphs" stroke="#1a1a1a" stroke-width="0.18">gold</text>
<text x="485.4" y="461.5" font-size="9.1" fill="#1a1a1a" textLength="29.1" lengthAdjust="spacingAndGlyphs" stroke="#1a1a1a" stroke-width="0.18">3649.25</text>
<text x="575.8" y="461.5" font-size="9.1" fill="#1a1a1a" textLength="15.5" lengthAdjust="spacingAndGlyphs" stroke="#1a1a1a" stroke-width="0.18">0.00</text>
<text x="652.5" y="461.5" font-size="9.1" fill="#1a1a1a" textLength="15.5" lengthAdjust="spacingAndGlyphs" stroke="#1a1a1a" stroke-width="0.18">0.00</text>
<text x="715.8" y="461.5" font-size="9.1" fill="#1a1a1a" textLength="29.2" lengthAdjust="spacingAndGlyphs" stroke="#1a1a1a" stroke-width="0.18">3643.44</text>
<text x="817.1" y="461.5" font-size="9.1" fill="#1a1a1a" textLength="4.2" lengthAdjust="spacingAndGlyphs" stroke="#1a1a1a" stroke-width="0.18">0</text>
<text x="875.78" y="461.5" font-size="9.1" fill="#1a1a1a" textLength="22.72" lengthAdjust="spacingAndGlyphs" stroke="#1a1a1a" stroke-width="0.18">-1 289</text>
<text x="979.08" y="461.5" font-size="9.1" fill="#1a1a1a" textLength="22.72" lengthAdjust="spacingAndGlyphs" stroke="#1a1a1a" stroke-width="0.18">-2 574</text>
<path d="M1009.6 456.80l4.2 4.2M1013.8 456.80l-4.2 4.2" stroke="#909090" stroke-width="1.15"/>
<path d="M14.4 468.35h5.6l2.6 2.6v7h-8.2z" fill="#fcfcfc" stroke="#8d8d8d" stroke-width="0.9"/><path d="M20 468.35v2.6h2.6z" fill="#777" stroke="#777" stroke-width="0.5"/>
<circle cx="21.9" cy="476.45" r="2.4" fill="#2a8be0" stroke="#1766b8" stroke-width="0.6"/><circle cx="21.5" cy="475.85" r="0.9" fill="#fff" opacity="0.45"/>
<rect x="28" y="467.75" width="37.6" height="10.8" rx="1.5" fill="#fdfdfd"/>
<text x="173.9" y="476.25" font-size="9.1" fill="#1a1a1a" textLength="73.1" lengthAdjust="spacingAndGlyphs" stroke="#1a1a1a" stroke-width="0.18">2025.09.10 21:31:04</text>
<text x="300.7" y="476.25" font-size="9.1" fill="#1a1a1a" textLength="14.3" lengthAdjust="spacingAndGlyphs" stroke="#1a1a1a" stroke-width="0.18">buy</text>
<text x="353.3" y="476.25" font-size="9.1" fill="#1a1a1a" textLength="15.5" lengthAdjust="spacingAndGlyphs" stroke="#1a1a1a" stroke-width="0.18">0.06</text>
<text x="420" y="476.25" font-size="9.1" fill="#1a1a1a" textLength="17" lengthAdjust="spacingAndGlyphs" stroke="#1a1a1a" stroke-width="0.18">gold</text>
<text x="485.4" y="476.25" font-size="9.1" fill="#1a1a1a" textLength="29.1" lengthAdjust="spacingAndGlyphs" stroke="#1a1a1a" stroke-width="0.18">3647.94</text>
<text x="575.8" y="476.25" font-size="9.1" fill="#1a1a1a" textLength="15.5" lengthAdjust="spacingAndGlyphs" stroke="#1a1a1a" stroke-width="0.18">0.00</text>
<text x="652.5" y="476.25" font-size="9.1" fill="#1a1a1a" textLength="15.5" lengthAdjust="spacingAndGlyphs" stroke="#1a1a1a" stroke-width="0.18">0.00</text>
<text x="715.8" y="476.25" font-size="9.1" fill="#1a1a1a" textLength="29.2" lengthAdjust="spacingAndGlyphs" stroke="#1a1a1a" stroke-width="0.18">3643.44</text>
<text x="817.1" y="476.25" font-size="9.1" fill="#1a1a1a" textLength="4.2" lengthAdjust="spacingAndGlyphs" stroke="#1a1a1a" stroke-width="0.18">0</text>
<text x="875.78" y="476.25" font-size="9.1" fill="#1a1a1a" textLength="22.72" lengthAdjust="spacingAndGlyphs" stroke="#1a1a1a" stroke-width="0.18">-2 579</text>
<text x="979.08" y="476.25" font-size="9.1" fill="#1a1a1a" textLength="22.72" lengthAdjust="spacingAndGlyphs" stroke="#1a1a1a" stroke-width="0.18">-3 987</text>
<path d="M1009.6 471.55l4.2 4.2M1013.8 471.55l-4.2 4.2" stroke="#909090" stroke-width="1.15"/>
<path d="M14.4 483.10h5.6l2.6 2.6v7h-8.2z" fill="#fcfcfc" stroke="#8d8d8d" stroke-width="0.9"/><path d="M20 483.10v2.6h2.6z" fill="#777" stroke="#777" stroke-width="0.5"/>
<circle cx="21.9" cy="491.20" r="2.4" fill="#2a8be0" stroke="#1766b8" stroke-width="0.6"/><circle cx="21.5" cy="490.60" r="0.9" fill="#fff" opacity="0.45"/>
<text x="173.9" y="491.0" font-size="9.1" fill="#1a1a1a" textLength="73.1" lengthAdjust="spacingAndGlyphs" stroke="#1a1a1a" stroke-width="0.18">2025.09.10 21:39:03</text>
<text x="300.7" y="491.0" font-size="9.1" fill="#1a1a1a" textLength="14.3" lengthAdjust="spacingAndGlyphs" stroke="#1a1a1a" stroke-width="0.18">buy</text>
<text x="353.3" y="491.0" font-size="9.1" fill="#1a1a1a" textLength="15.5" lengthAdjust="spacingAndGlyphs" stroke="#1a1a1a" stroke-width="0.18">0.11</text>
<text x="420" y="491.0" font-size="9.1" fill="#1a1a1a" textLength="17" lengthAdjust="spacingAndGlyphs" stroke="#1a1a1a" stroke-width="0.18">gold</text>
<text x="485.4" y="491.0" font-size="9.1" fill="#1a1a1a" textLength="29.1" lengthAdjust="spacingAndGlyphs" stroke="#1a1a1a" stroke-width="0.18">3645.36</text>
<text x="575.8" y="491.0" font-size="9.1" fill="#1a1a1a" textLength="15.5" lengthAdjust="spacingAndGlyphs" stroke="#1a1a1a" stroke-width="0.18">0.00</text>
<text x="652.5" y="491.0" font-size="9.1" fill="#1a1a1a" textLength="15.5" lengthAdjust="spacingAndGlyphs" stroke="#1a1a1a" stroke-width="0.18">0.00</text>
<text x="715.8" y="491.0" font-size="9.1" fill="#1a1a1a" textLength="29.2" lengthAdjust="spacingAndGlyphs" stroke="#1a1a1a" stroke-width="0.18">3643.44</text>
<text x="817.1" y="491.0" font-size="9.1" fill="#1a1a1a" textLength="4.2" lengthAdjust="spacingAndGlyphs" stroke="#1a1a1a" stroke-width="0.18">0</text>
<text x="875.78" y="491.0" font-size="9.1" fill="#1a1a1a" textLength="22.72" lengthAdjust="spacingAndGlyphs" stroke="#1a1a1a" stroke-width="0.18">-4 728</text>
<text x="979.08" y="491.0" font-size="9.1" fill="#1a1a1a" textLength="22.72" lengthAdjust="spacingAndGlyphs" stroke="#1a1a1a" stroke-width="0.18">-3 119</text>
<path d="M1009.6 486.30l4.2 4.2M1013.8 486.30l-4.2 4.2" stroke="#909090" stroke-width="1.15"/>
<path d="M14.4 497.85h5.6l2.6 2.6v7h-8.2z" fill="#fcfcfc" stroke="#8d8d8d" stroke-width="0.9"/><path d="M20 497.85v2.6h2.6z" fill="#777" stroke="#777" stroke-width="0.5"/>
<circle cx="21.9" cy="505.95" r="2.4" fill="#2a8be0" stroke="#1766b8" stroke-width="0.6"/><circle cx="21.5" cy="505.35" r="0.9" fill="#fff" opacity="0.45"/>
<rect x="28" y="497.25" width="37.6" height="10.8" rx="1.5" fill="#fdfdfd"/>
<text x="173.9" y="505.75" font-size="9.1" fill="#1a1a1a" textLength="73.1" lengthAdjust="spacingAndGlyphs" stroke="#1a1a1a" stroke-width="0.18">2025.09.10 22:21:21</text>
<text x="300.7" y="505.75" font-size="9.1" fill="#1a1a1a" textLength="14.3" lengthAdjust="spacingAndGlyphs" stroke="#1a1a1a" stroke-width="0.18">buy</text>
<text x="353.3" y="505.75" font-size="9.1" fill="#1a1a1a" textLength="15.5" lengthAdjust="spacingAndGlyphs" stroke="#1a1a1a" stroke-width="0.18">0.20</text>
<text x="420" y="505.75" font-size="9.1" fill="#1a1a1a" textLength="17" lengthAdjust="spacingAndGlyphs" stroke="#1a1a1a" stroke-width="0.18">gold</text>
<text x="485.4" y="505.75" font-size="9.1" fill="#1a1a1a" textLength="29.1" lengthAdjust="spacingAndGlyphs" stroke="#1a1a1a" stroke-width="0.18">3640.13</text>
<text x="575.8" y="505.75" font-size="9.1" fill="#1a1a1a" textLength="15.5" lengthAdjust="spacingAndGlyphs" stroke="#1a1a1a" stroke-width="0.18">0.00</text>
<text x="652.5" y="505.75" font-size="9.1" fill="#1a1a1a" textLength="15.5" lengthAdjust="spacingAndGlyphs" stroke="#1a1a1a" stroke-width="0.18">0.00</text>
<text x="715.8" y="505.75" font-size="9.1" fill="#1a1a1a" textLength="29.2" lengthAdjust="spacingAndGlyphs" stroke="#1a1a1a" stroke-width="0.18">3643.44</text>
<text x="817.1" y="505.75" font-size="9.1" fill="#1a1a1a" textLength="4.2" lengthAdjust="spacingAndGlyphs" stroke="#1a1a1a" stroke-width="0.18">0</text>
<text x="875.78" y="505.75" font-size="9.1" fill="#1a1a1a" textLength="22.72" lengthAdjust="spacingAndGlyphs" stroke="#1a1a1a" stroke-width="0.18">-8 596</text>
<text x="981.98" y="505.75" font-size="9.1" fill="#1a1a1a" textLength="19.82" lengthAdjust="spacingAndGlyphs" stroke="#1a1a1a" stroke-width="0.18">9 775</text>
<path d="M1009.6 501.05l4.2 4.2M1013.8 501.05l-4.2 4.2" stroke="#909090" stroke-width="1.15"/>
<path d="M14.4 512.60h5.6l2.6 2.6v7h-8.2z" fill="#fcfcfc" stroke="#8d8d8d" stroke-width="0.9"/><path d="M20 512.60v2.6h2.6z" fill="#777" stroke="#777" stroke-width="0.5"/>
<circle cx="21.9" cy="520.70" r="2.4" fill="#e8502a" stroke="#b8341a" stroke-width="0.6"/><circle cx="21.5" cy="520.10" r="0.9" fill="#fff" opacity="0.45"/>
<text x="173.9" y="520.5" font-size="9.1" fill="#1a1a1a" textLength="73.1" lengthAdjust="spacingAndGlyphs" stroke="#1a1a1a" stroke-width="0.18">2025.09.10 22:37:08</text>
<text x="303.7" y="520.5" font-size="9.1" fill="#1a1a1a" textLength="11.3" lengthAdjust="spacingAndGlyphs" stroke="#1a1a1a" stroke-width="0.18">sell</text>
<text x="353.3" y="520.5" font-size="9.1" fill="#1a1a1a" textLength="15.5" lengthAdjust="spacingAndGlyphs" stroke="#1a1a1a" stroke-width="0.18">0.03</text>
<text x="420" y="520.5" font-size="9.1" fill="#1a1a1a" textLength="17" lengthAdjust="spacingAndGlyphs" stroke="#1a1a1a" stroke-width="0.18">gold</text>
<text x="485.4" y="520.5" font-size="9.1" fill="#1a1a1a" textLength="29.1" lengthAdjust="spacingAndGlyphs" stroke="#1a1a1a" stroke-width="0.18">3635.63</text>
<text x="575.8" y="520.5" font-size="9.1" fill="#1a1a1a" textLength="15.5" lengthAdjust="spacingAndGlyphs" stroke="#1a1a1a" stroke-width="0.18">0.00</text>
<text x="652.5" y="520.5" font-size="9.1" fill="#1a1a1a" textLength="15.5" lengthAdjust="spacingAndGlyphs" stroke="#1a1a1a" stroke-width="0.18">0.00</text>
<text x="715.8" y="520.5" font-size="9.1" fill="#1a1a1a" textLength="29.2" lengthAdjust="spacingAndGlyphs" stroke="#1a1a1a" stroke-width="0.18">3643.82</text>
<text x="817.1" y="520.5" font-size="9.1" fill="#1a1a1a" textLength="4.2" lengthAdjust="spacingAndGlyphs" stroke="#1a1a1a" stroke-width="0.18">0</text>
<text x="885.06" y="520.5" font-size="9.1" fill="#1a1a1a" textLength="13.44" lengthAdjust="spacingAndGlyphs" stroke="#1a1a1a" stroke-width="0.18">442</text>
<text x="979.08" y="520.5" font-size="9.1" fill="#1a1a1a" textLength="22.72" lengthAdjust="spacingAndGlyphs" stroke="#1a1a1a" stroke-width="0.18">-3 628</text>
<path d="M1009.6 515.80l4.2 4.2M1013.8 515.80l-4.2 4.2" stroke="#909090" stroke-width="1.15"/>
<path d="M14.4 527.35h5.6l2.6 2.6v7h-8.2z" fill="#fcfcfc" stroke="#8d8d8d" stroke-width="0.9"/><path d="M20 527.35v2.6h2.6z" fill="#777" stroke="#777" stroke-width="0.5"/>
<circle cx="21.9" cy="535.45" r="2.4" fill="#e8502a" stroke="#b8341a" stroke-width="0.6"/><circle cx="21.5" cy="534.85" r="0.9" fill="#fff" opacity="0.45"/>
<rect x="28" y="526.75" width="37.6" height="10.8" rx="1.5" fill="#fdfdfd"/>
<text x="173.9" y="535.25" font-size="9.1" fill="#1a1a1a" textLength="73.1" lengthAdjust="spacingAndGlyphs" stroke="#1a1a1a" stroke-width="0.18">2025.09.10 22:39:11</text>
<text x="303.7" y="535.25" font-size="9.1" fill="#1a1a1a" textLength="11.3" lengthAdjust="spacingAndGlyphs" stroke="#1a1a1a" stroke-width="0.18">sell</text>
<text x="353.3" y="535.25" font-size="9.1" fill="#1a1a1a" textLength="15.5" lengthAdjust="spacingAndGlyphs" stroke="#1a1a1a" stroke-width="0.18">0.06</text>
<text x="420" y="535.25" font-size="9.1" fill="#1a1a1a" textLength="17" lengthAdjust="spacingAndGlyphs" stroke="#1a1a1a" stroke-width="0.18">gold</text>
<text x="485.4" y="535.25" font-size="9.1" fill="#1a1a1a" textLength="29.1" lengthAdjust="spacingAndGlyphs" stroke="#1a1a1a" stroke-width="0.18">3636.97</text>
<text x="575.8" y="535.25" font-size="9.1" fill="#1a1a1a" textLength="15.5" lengthAdjust="spacingAndGlyphs" stroke="#1a1a1a" stroke-width="0.18">0.00</text>
<text x="652.5" y="535.25" font-size="9.1" fill="#1a1a1a" textLength="15.5" lengthAdjust="spacingAndGlyphs" stroke="#1a1a1a" stroke-width="0.18">0.00</text>
<text x="715.8" y="535.25" font-size="9.1" fill="#1a1a1a" textLength="29.2" lengthAdjust="spacingAndGlyphs" stroke="#1a1a1a" stroke-width="0.18">3643.82</text>
<text x="817.1" y="535.25" font-size="9.1" fill="#1a1a1a" textLength="4.2" lengthAdjust="spacingAndGlyphs" stroke="#1a1a1a" stroke-width="0.18">0</text>
<text x="885.06" y="535.25" font-size="9.1" fill="#1a1a1a" textLength="13.44" lengthAdjust="spacingAndGlyphs" stroke="#1a1a1a" stroke-width="0.18">885</text>
<text x="979.08" y="535.25" font-size="9.1" fill="#1a1a1a" textLength="22.72" lengthAdjust="spacingAndGlyphs" stroke="#1a1a1a" stroke-width="0.18">-6 069</text>
<path d="M1009.6 530.55l4.2 4.2M1013.8 530.55l-4.2 4.2" stroke="#909090" stroke-width="1.15"/>
<path d="M14.4 542.10h5.6l2.6 2.6v7h-8.2z" fill="#fcfcfc" stroke="#8d8d8d" stroke-width="0.9"/><path d="M20 542.10v2.6h2.6z" fill="#777" stroke="#777" stroke-width="0.5"/>
<circle cx="21.9" cy="550.20" r="2.4" fill="#e8502a" stroke="#b8341a" stroke-width="0.6"/><circle cx="21.5" cy="549.60" r="0.9" fill="#fff" opacity="0.45"/>
<text x="173.9" y="550.0" font-size="9.1" fill="#1a1a1a" textLength="73.1" lengthAdjust="spacingAndGlyphs" stroke="#1a1a1a" stroke-width="0.18">2025.09.10 22:49:01</text>
<text x="303.7" y="550.0" font-size="9.1" fill="#1a1a1a" textLength="11.3" lengthAdjust="spacingAndGlyphs" stroke="#1a1a1a" stroke-width="0.18">sell</text>
<text x="353.3" y="550.0" font-size="9.1" fill="#1a1a1a" textLength="15.5" lengthAdjust="spacingAndGlyphs" stroke="#1a1a1a" stroke-width="0.18">0.10</text>
<text x="420" y="550.0" font-size="9.1" fill="#1a1a1a" textLength="17" lengthAdjust="spacingAndGlyphs" stroke="#1a1a1a" stroke-width="0.18">gold</text>
<text x="485.4" y="550.0" font-size="9.1" fill="#1a1a1a" textLength="29.1" lengthAdjust="spacingAndGlyphs" stroke="#1a1a1a" stroke-width="0.18">3639.56</text>
<text x="575.8" y="550.0" font-size="9.1" fill="#1a1a1a" textLength="15.5" lengthAdjust="spacingAndGlyphs" stroke="#1a1a1a" stroke-width="0.18">0.00</text>
<text x="652.5" y="550.0" font-size="9.1" fill="#1a1a1a" textLength="15.5" lengthAdjust="spacingAndGlyphs" stroke="#1a1a1a" stroke-width="0.18">0.00</text>
<text x="715.8" y="550.0" font-size="9.1" fill="#1a1a1a" textLength="29.2" lengthAdjust="spacingAndGlyphs" stroke="#1a1a1a" stroke-width="0.18">3643.82</text>
<text x="817.1" y="550.0" font-size="9.1" fill="#1a1a1a" textLength="4.2" lengthAdjust="spacingAndGlyphs" stroke="#1a1a1a" stroke-width="0.18">0</text>
<text x="878.68" y="550.0" font-size="9.1" fill="#1a1a1a" textLength="19.82" lengthAdjust="spacingAndGlyphs" stroke="#1a1a1a" stroke-width="0.18">1 474</text>
<text x="979.08" y="550.0" font-size="9.1" fill="#1a1a1a" textLength="22.72" lengthAdjust="spacingAndGlyphs" stroke="#1a1a1a" stroke-width="0.18">-6 290</text>
<path d="M1009.6 545.30l4.2 4.2M1013.8 545.30l-4.2 4.2" stroke="#909090" stroke-width="1.15"/>
<rect x="14.9" y="557.05" width="7.6" height="9.6" rx="0.8" fill="#fafafa" stroke="#9a9a9a" stroke-width="0.7"/><path d="M17.6 559.05h2.2v2.4h1.6l-2.7 3-2.7-3h1.6z" fill="#e0401c"/>
<text x="28.8" y="565.15" font-size="9.1" fill="#111" font-weight="bold" textLength="17.4" lengthAdjust="spacingAndGlyphs">残高:</text>
<text x="50" y="565.15" font-size="9.1" fill="#111" font-weight="bold" textLength="52" lengthAdjust="spacingAndGlyphs">1 119 639 JPY</text>
<text x="108" y="565.15" font-size="9.1" fill="#111" font-weight="bold" textLength="45" lengthAdjust="spacingAndGlyphs">有効証拠金:</text>
<text x="156.3" y="565.15" font-size="9.1" fill="#111" font-weight="bold" textLength="38" lengthAdjust="spacingAndGlyphs">1 089 356</text>
<text x="200" y="565.15" font-size="9.1" fill="#111" font-weight="bold" textLength="45" lengthAdjust="spacingAndGlyphs">必要証拠金:</text>
<text x="248.2" y="565.15" font-size="9.1" fill="#111" font-weight="bold" textLength="24.3" lengthAdjust="spacingAndGlyphs">11 268</text>
<text x="278" y="565.15" font-size="9.1" fill="#111" font-weight="bold" textLength="45" lengthAdjust="spacingAndGlyphs">余剰証拠金:</text>
<text x="326.3" y="565.15" font-size="9.1" fill="#111" font-weight="bold" textLength="38" lengthAdjust="spacingAndGlyphs">1 078 088</text>
<text x="370" y="565.15" font-size="9.1" fill="#111" font-weight="bold" textLength="54.2" lengthAdjust="spacingAndGlyphs">証拠金維持率:</text>
<text x="427.5" y="565.15" font-size="9.1" fill="#111" font-weight="bold" textLength="37.5" lengthAdjust="spacingAndGlyphs">9667.70%</text>
<text x="970.5" y="565.15" font-size="9.1" fill="#111" font-weight="bold" textLength="30.8" lengthAdjust="spacingAndGlyphs">-30 283</text>
<rect x="11.6" y="569.2" width="1007.7" height="3.7" fill="#fff"/>
<path d="M45.8 573.3H1019.3" stroke="#4a4a4a" stroke-width="0.9"/>
<path d="M12.6 573.4V586.8H45.7V573.3" stroke="#3c3c3c" stroke-width="1" fill="#fff"/><rect x="12.2" y="569.2" width="33" height="4.6" fill="#fff"/><path d="M12.4 573l0.4 1.2" stroke="#555" stroke-width="0.8"/><path d="M13.2 587.4H46.3V574" stroke="#3c3c3c" stroke-width="0.9" fill="none"/>
<text x="21.2" y="583.7" font-size="8.7" fill="#111" textLength="16.2" lengthAdjust="spacingAndGlyphs">取引</text>
<text x="53.3" y="583.7" font-size="8.7" fill="#8a8a8a" textLength="34.7" lengthAdjust="spacingAndGlyphs">運用比率</text>
<text x="104.5" y="583.7" font-size="8.7" fill="#8a8a8a" textLength="33.8" lengthAdjust="spacingAndGlyphs">口座履歴</text>
<text x="154.3" y="583.7" font-size="8.7" fill="#8a8a8a" textLength="24.5" lengthAdjust="spacingAndGlyphs">ニュース</text>
<text x="193.8" y="583.7" font-size="8.7" fill="#8a8a8a" textLength="42" lengthAdjust="spacingAndGlyphs">アラーム設定</text>
<text x="251.3" y="583.7" font-size="8.7" fill="#8a8a8a" textLength="45.7" lengthAdjust="spacingAndGlyphs">メールボックス</text>
<text x="317" y="583.7" font-size="8.7" fill="#8a8a8a" textLength="30.5" lengthAdjust="spacingAndGlyphs">マーケット</text>
<text x="375" y="583.7" font-size="8.7" fill="#8a8a8a" textLength="16.8" lengthAdjust="spacingAndGlyphs">記事</text>
<text x="412.5" y="583.7" font-size="8.7" fill="#8a8a8a" textLength="30.5" lengthAdjust="spacingAndGlyphs">ライブラリ</text>
<text x="458.3" y="583.7" font-size="8.7" fill="#8a8a8a" textLength="38.7" lengthAdjust="spacingAndGlyphs">エキスパート</text>
<text x="512.5" y="583.7" font-size="8.7" fill="#8a8a8a" textLength="34.5" lengthAdjust="spacingAndGlyphs">操作履歴</text>
<path d="M96.3 576.2V585.4M146.3 576.2V585.4M186.3 576.2V585.4M243.8 576.2V585.4M309.5 576.2V585.4M367.5 576.2V585.4M405 576.2V585.4M451.3 576.2V585.4M505 576.2V585.4M555 576.2V585.4" stroke="#8e8e8e" stroke-width="0.8"/>
<text x="298.2" y="586.3" font-size="7.2" fill="#e8281a" textLength="3.6" lengthAdjust="spacingAndGlyphs">7</text>
<text x="349.6" y="586.3" font-size="7.2" fill="#e8281a" textLength="10" lengthAdjust="spacingAndGlyphs">105</text>
<text x="393.8" y="586.3" font-size="7.2" fill="#e8281a" textLength="3.6" lengthAdjust="spacingAndGlyphs">8</text>
<rect x="0" y="589.4" width="1024" height="1.2" fill="#fbfbfb"/>
</svg>
<svg id="status" width="1024" height="19" viewBox="0 591 1024 19" style="top:591px">
<rect x="0" y="591" width="1024" height="19" fill="#f0f0f0"/>
<rect x="0" y="591" width="1024" height="0.9" fill="#dcdcdc"/>
<text x="2" y="604.4" font-size="9" fill="#111" textLength="101.8" lengthAdjust="spacingAndGlyphs">F1キーでヘルプが表示されます</text>
<text x="502" y="604.4" font-size="9" fill="#111" textLength="27.5" lengthAdjust="spacingAndGlyphs">Default</text>
<path d="M497.6 595V608M583.4 595V608M658.5 595V608M711.4 595V608M763.9 595V608M813.9 595V608M864.4 595V608M913.4 595V608" stroke="#b4b4b4" stroke-width="0.8"/>
<rect x="917.70" y="596.4" width="1.25" height="9.8" fill="#4f8a2a"/><rect x="917.70" y="603.60" width="1.25" height="2.60" fill="#1f5a9c"/><rect x="919.65" y="596.4" width="1.25" height="9.8" fill="#4f8a2a"/><rect x="919.65" y="602.80" width="1.25" height="3.40" fill="#1f5a9c"/><rect x="921.60" y="596.4" width="1.25" height="9.8" fill="#4f8a2a"/><rect x="921.60" y="602.00" width="1.25" height="4.20" fill="#1f5a9c"/><rect x="923.55" y="596.4" width="1.25" height="9.8" fill="#8f9440"/><rect x="923.55" y="601.20" width="1.25" height="5.00" fill="#1f5a9c"/><rect x="925.50" y="596.4" width="1.25" height="9.8" fill="#8f9440"/><rect x="925.50" y="600.40" width="1.25" height="5.80" fill="#1f5a9c"/><rect x="927.45" y="596.4" width="1.25" height="9.8" fill="#8f9440"/><rect x="927.45" y="599.60" width="1.25" height="6.60" fill="#1f5a9c"/><rect x="929.40" y="596.4" width="1.25" height="9.8" fill="#8f9440"/><rect x="929.40" y="598.80" width="1.25" height="7.40" fill="#1f5a9c"/><rect x="931.35" y="596.4" width="1.25" height="9.8" fill="#8f9440"/><rect x="931.35" y="598.00" width="1.25" height="8.20" fill="#1f5a9c"/><rect x="933.30" y="596.4" width="1.25" height="9.8" fill="#8f9440"/><rect x="933.30" y="597.20" width="1.25" height="9.00" fill="#1f5a9c"/>
<text x="938" y="604.4" font-size="9" fill="#111" textLength="58.8" lengthAdjust="spacingAndGlyphs">378166/1295 kb</text>
<path d="M1012.4 608.4l8.6-8.6M1014.4 608.4l6.6-6.6M1016.4 608.4l4.6-4.6M1018.4 608.4l2.6-2.6" stroke="#a8a8a8" stroke-width="0.8"/>
</svg>
<svg id="frame" width="1024" height="610" viewBox="0 0 1024 610" style="top:0">
<rect x="0" y="0" width="1024" height="1" fill="#4a515b"/>
<rect x="1022.5" y="0" width="1.5" height="610" fill="#243a5c"/>
<rect x="1021.4" y="0" width="1.1" height="610" fill="#c8ccd2" opacity="0.7"/>
<rect x="0" y="608.6" width="1024" height="1.4" fill="#2a3442"/>
</svg>
</body></html>
